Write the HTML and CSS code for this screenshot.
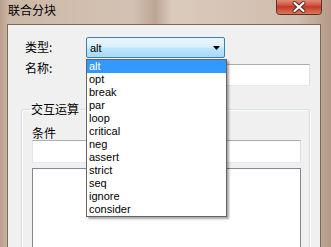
FILE: index.html
```html
<!DOCTYPE html>
<html lang="zh-CN">

<head>
    <meta charset="UTF-8">
    <title>联合分块</title>
    <link rel="stylesheet" href="styles.css">
</head>

<body>
    <div class="window">
        <div class="titlebar">
            <span class="title">联合分块</span>
            <div class="close-btn">
                <svg width="46" height="15" viewBox="0 0 46 15">
                    <defs>
                        <linearGradient id="red" x1="0" y1="0" x2="0" y2="1">
                            <stop offset="0" stop-color="#e8a89a" />
                            <stop offset="0.45" stop-color="#d25a45" />
                            <stop offset="0.55" stop-color="#c23a28" />
                            <stop offset="1" stop-color="#e07a5c" />
                        </linearGradient>
                    </defs>
                    <rect x="0.5" y="-3" width="45" height="17.5" rx="3" fill="url(#red)" stroke="#5c3026" />
                    <path d="M18.5 3 L27.5 11 M27.5 3 L18.5 11" stroke="#4a2a22" stroke-width="4" stroke-linecap="round" />
                    <path d="M18.5 3 L27.5 11 M27.5 3 L18.5 11" stroke="#ffffff" stroke-width="2.2" stroke-linecap="round" />
                </svg>
            </div>
        </div>
        <div class="client">
            <div class="row row-type">
                <label class="label">类型:</label>
                <div class="combo">
                    <span class="combo-text">alt</span>
                    <svg class="combo-arrow" width="7" height="4" viewBox="0 0 7 4">
                        <path d="M0 0 H7 L3.5 4 Z" fill="#000" />
                    </svg>
                </div>
            </div>
            <div class="row row-name">
                <label class="label">名称:</label>
                <div class="textbox name-box"></div>
            </div>
            <fieldset class="group">
                <legend>交互运算</legend>
                <div class="cond-label">条件</div>
                <div class="textbox cond-box"></div>
                <div class="textarea"></div>
            </fieldset>

            <!-- open combo list -->
            <ul class="dropdown">
                <li class="selected">alt</li>
                <li>opt</li>
                <li>break</li>
                <li>par</li>
                <li>loop</li>
                <li>critical</li>
                <li>neg</li>
                <li>assert</li>
                <li>strict</li>
                <li>seq</li>
                <li>ignore</li>
                <li>consider</li>
            </ul>
        </div>
    </div>
</body>

</html>
```

FILE: styles.css
```css
body {
    margin: 0;
    font-family: "Liberation Sans", "Noto Sans CJK SC", sans-serif;
    color: #000;
}

.window {
    width: 331px;
    height: 247px;
    overflow: hidden;
    display: flex;
    flex-direction: column;
    background: linear-gradient(to right, #b89e8b 0%, #cdb8a7 3%, #d3c2b3 40%, #bda593 47%, #dbcbbd 52%, #cfbcac 90%, #b39a87 100%);
}

.titlebar {
    height: 24px;
    flex-shrink: 0;
    display: flex;
    align-items: flex-start;
    padding: 0 10px 0 8px;
}

.title {
    font: 12px/14px "Noto Sans CJK SC", sans-serif;
    margin-top: 3px;
}

.close-btn {
    margin-left: auto;
    width: 46px;
    height: 15px;
    margin-right: -1px;
}

.close-btn svg {
    display: block;
}

.client {
    flex: 1;
    position: relative;
    margin: 0 10px 0 7px;
    border: 1px solid #7a6a5e;
    border-bottom: none;
    background: #f0f0f0;
    padding: 12px 10px 0 13px;
}

.row {
    display: flex;
    align-items: flex-start;
    padding-left: 4px;
}

.label {
    width: 61px;
    flex-shrink: 0;
    font: 12px/14px "Noto Sans CJK SC", sans-serif;
}

.row-type .label {
    margin-top: 3px;
}

.row-name {
    margin-top: 3px;
}

.row-name .textbox {
    margin-top: 3px;
}

.combo {
    width: 139px;
    height: 21px;
    box-sizing: border-box;
    border: 1px solid #3c7fb1;
    border-radius: 2px;
    background: linear-gradient(#eaf6fd 0%, #d9f0fc 48%, #bee6fd 52%, #a7d9f5 100%);
    display: flex;
    align-items: center;
    padding: 0 4px 0 3px;
    font-size: 11px;
}

.combo-text {
    flex: 1;
}

.combo-arrow {
    display: block;
    margin-top: 1px;
}

.textbox {
    box-sizing: border-box;
    background: #fff;
    border: 1px solid;
    border-color: #abadb3 #dbdfe6 #e3e9ef #e2e3ea;
}

.name-box {
    flex: 1;
    height: 22px;
}

.group {
    margin: 16px 0 0;
    padding: 0 8px 0 10px;
    border: 1px solid #d5dfe5;
    border-radius: 3px;
    box-shadow: inset 1px 1px 0 #fff, 1px 1px 0 #fff;
    height: 200px;
}

.group legend {
    font: 12px/14px "Noto Sans CJK SC", sans-serif;
    padding: 0 1px;
    margin-left: -2px;
}

.cond-label {
    font: 12px/14px "Noto Sans CJK SC", sans-serif;
    margin-top: 10px;
}

.cond-box {
    height: 23px;
}

.textarea {
    margin-top: 5px;
    height: 120px;
    background: #fff;
    border: 1px solid #828790;
}

.dropdown {
    position: absolute;
    left: 78px;
    top: 34px;
    width: 141px;
    box-sizing: border-box;
    margin: 0;
    padding: 0;
    list-style: none;
    background: #fff;
    border: 1px solid #646464;
    box-shadow: 2px 2px 2px rgba(0, 0, 0, 0.35);
    font-size: 11px;
    line-height: 13px;
}

.dropdown li {
    padding-left: 2px;
}

.dropdown .selected {
    background: #3399ff;
    color: #fff;
}
```
